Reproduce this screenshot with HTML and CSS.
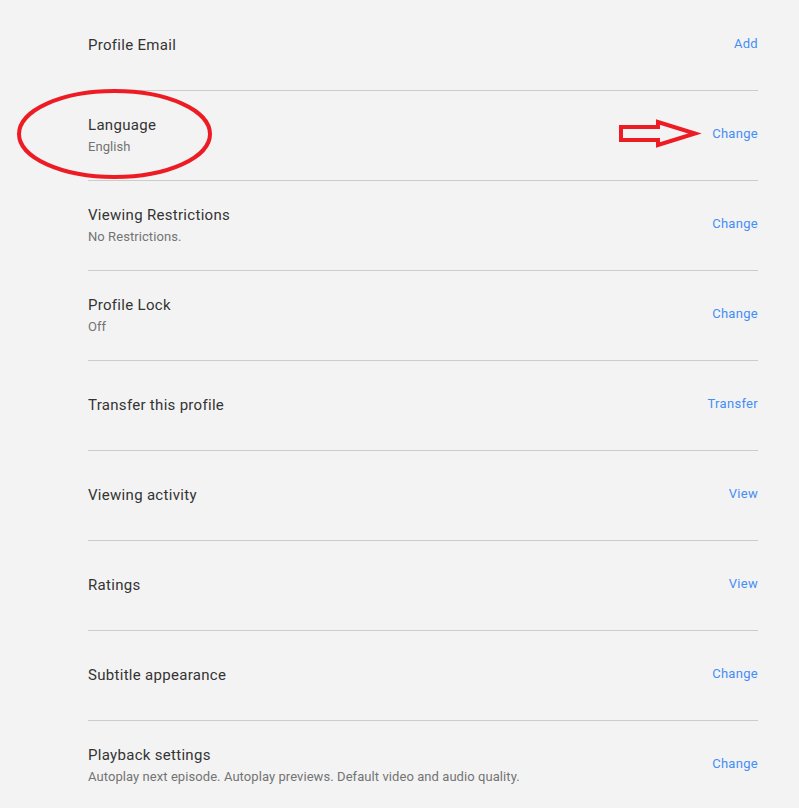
FILE: index.html
```html
<!DOCTYPE html>
<html lang="en">
<head>
<meta charset="utf-8">
<title>Profile settings</title>
<link rel="stylesheet" href="styles.css">
</head>
<body>
<div class="page">
  <ul class="settings">
    <li class="row">
      <div class="info"><div class="title">Profile Email</div></div>
      <a class="action" href="#">Add</a>
    </li>
    <li class="row">
      <div class="info"><div class="title">Language</div><div class="sub">English</div></div>
      <a class="action" href="#">Change</a>
    </li>
    <li class="row">
      <div class="info"><div class="title">Viewing Restrictions</div><div class="sub">No Restrictions.</div></div>
      <a class="action" href="#">Change</a>
    </li>
    <li class="row">
      <div class="info"><div class="title">Profile Lock</div><div class="sub">Off</div></div>
      <a class="action" href="#">Change</a>
    </li>
    <li class="row">
      <div class="info"><div class="title">Transfer this profile</div></div>
      <a class="action" href="#">Transfer</a>
    </li>
    <li class="row">
      <div class="info"><div class="title">Viewing activity</div></div>
      <a class="action" href="#">View</a>
    </li>
    <li class="row">
      <div class="info"><div class="title">Ratings</div></div>
      <a class="action" href="#">View</a>
    </li>
    <li class="row">
      <div class="info"><div class="title">Subtitle appearance</div></div>
      <a class="action" href="#">Change</a>
    </li>
    <li class="row">
      <div class="info"><div class="title">Playback settings</div><div class="sub">Autoplay next episode. Autoplay previews. Default video and audio quality.</div></div>
      <a class="action" href="#">Change</a>
    </li>
  </ul>
  <svg class="annotations" width="799" height="808" viewBox="0 0 799 808" aria-hidden="true">
    <ellipse cx="114.5" cy="134" rx="95.5" ry="43" fill="none" stroke="#ed1c24" stroke-width="4"/>
    <polygon points="621,127 658,127 658,122 695,133.5 658,145 658,140 621,140" fill="none" stroke="#ed1c24" stroke-width="4" stroke-linejoin="miter"/>
  </svg>
</div>
</body>
</html>
```

FILE: styles.css
```css
html, body {
  margin: 0;
  padding: 0;
  background: #f3f3f3;
}

body {
  font-family: Roboto, "Liberation Sans", Arial, sans-serif;
  color: #333333;
}

.page {
  position: relative;
  width: 799px;
  height: 808px;
  overflow: hidden;
}

.settings {
  list-style: none;
  margin: 0 0 0 88px;
  padding: 0;
  width: 670px;
}

.row {
  box-sizing: border-box;
  height: 90px;
  display: flex;
  align-items: center;
  justify-content: space-between;
  border-top: 1px solid #cccccc;
}

.row:first-child {
  border-top: none;
}

.info {
  display: flex;
  flex-direction: column;
  margin-bottom: 1px;
}

.title {
  font-size: 15px;
  line-height: 20px;
  letter-spacing: 0.3px;
  color: #333333;
}

.sub {
  font-size: 13px;
  line-height: 18px;
  letter-spacing: 0.07px;
  margin-top: 3px;
  color: #737373;
}

.action {
  font-size: 13px;
  line-height: 18px;
  letter-spacing: 0.3px;
  margin-bottom: 3px;
  color: #448ef6;
  text-decoration: none;
}

.annotations {
  position: absolute;
  left: 0;
  top: 0;
  pointer-events: none;
}
```
